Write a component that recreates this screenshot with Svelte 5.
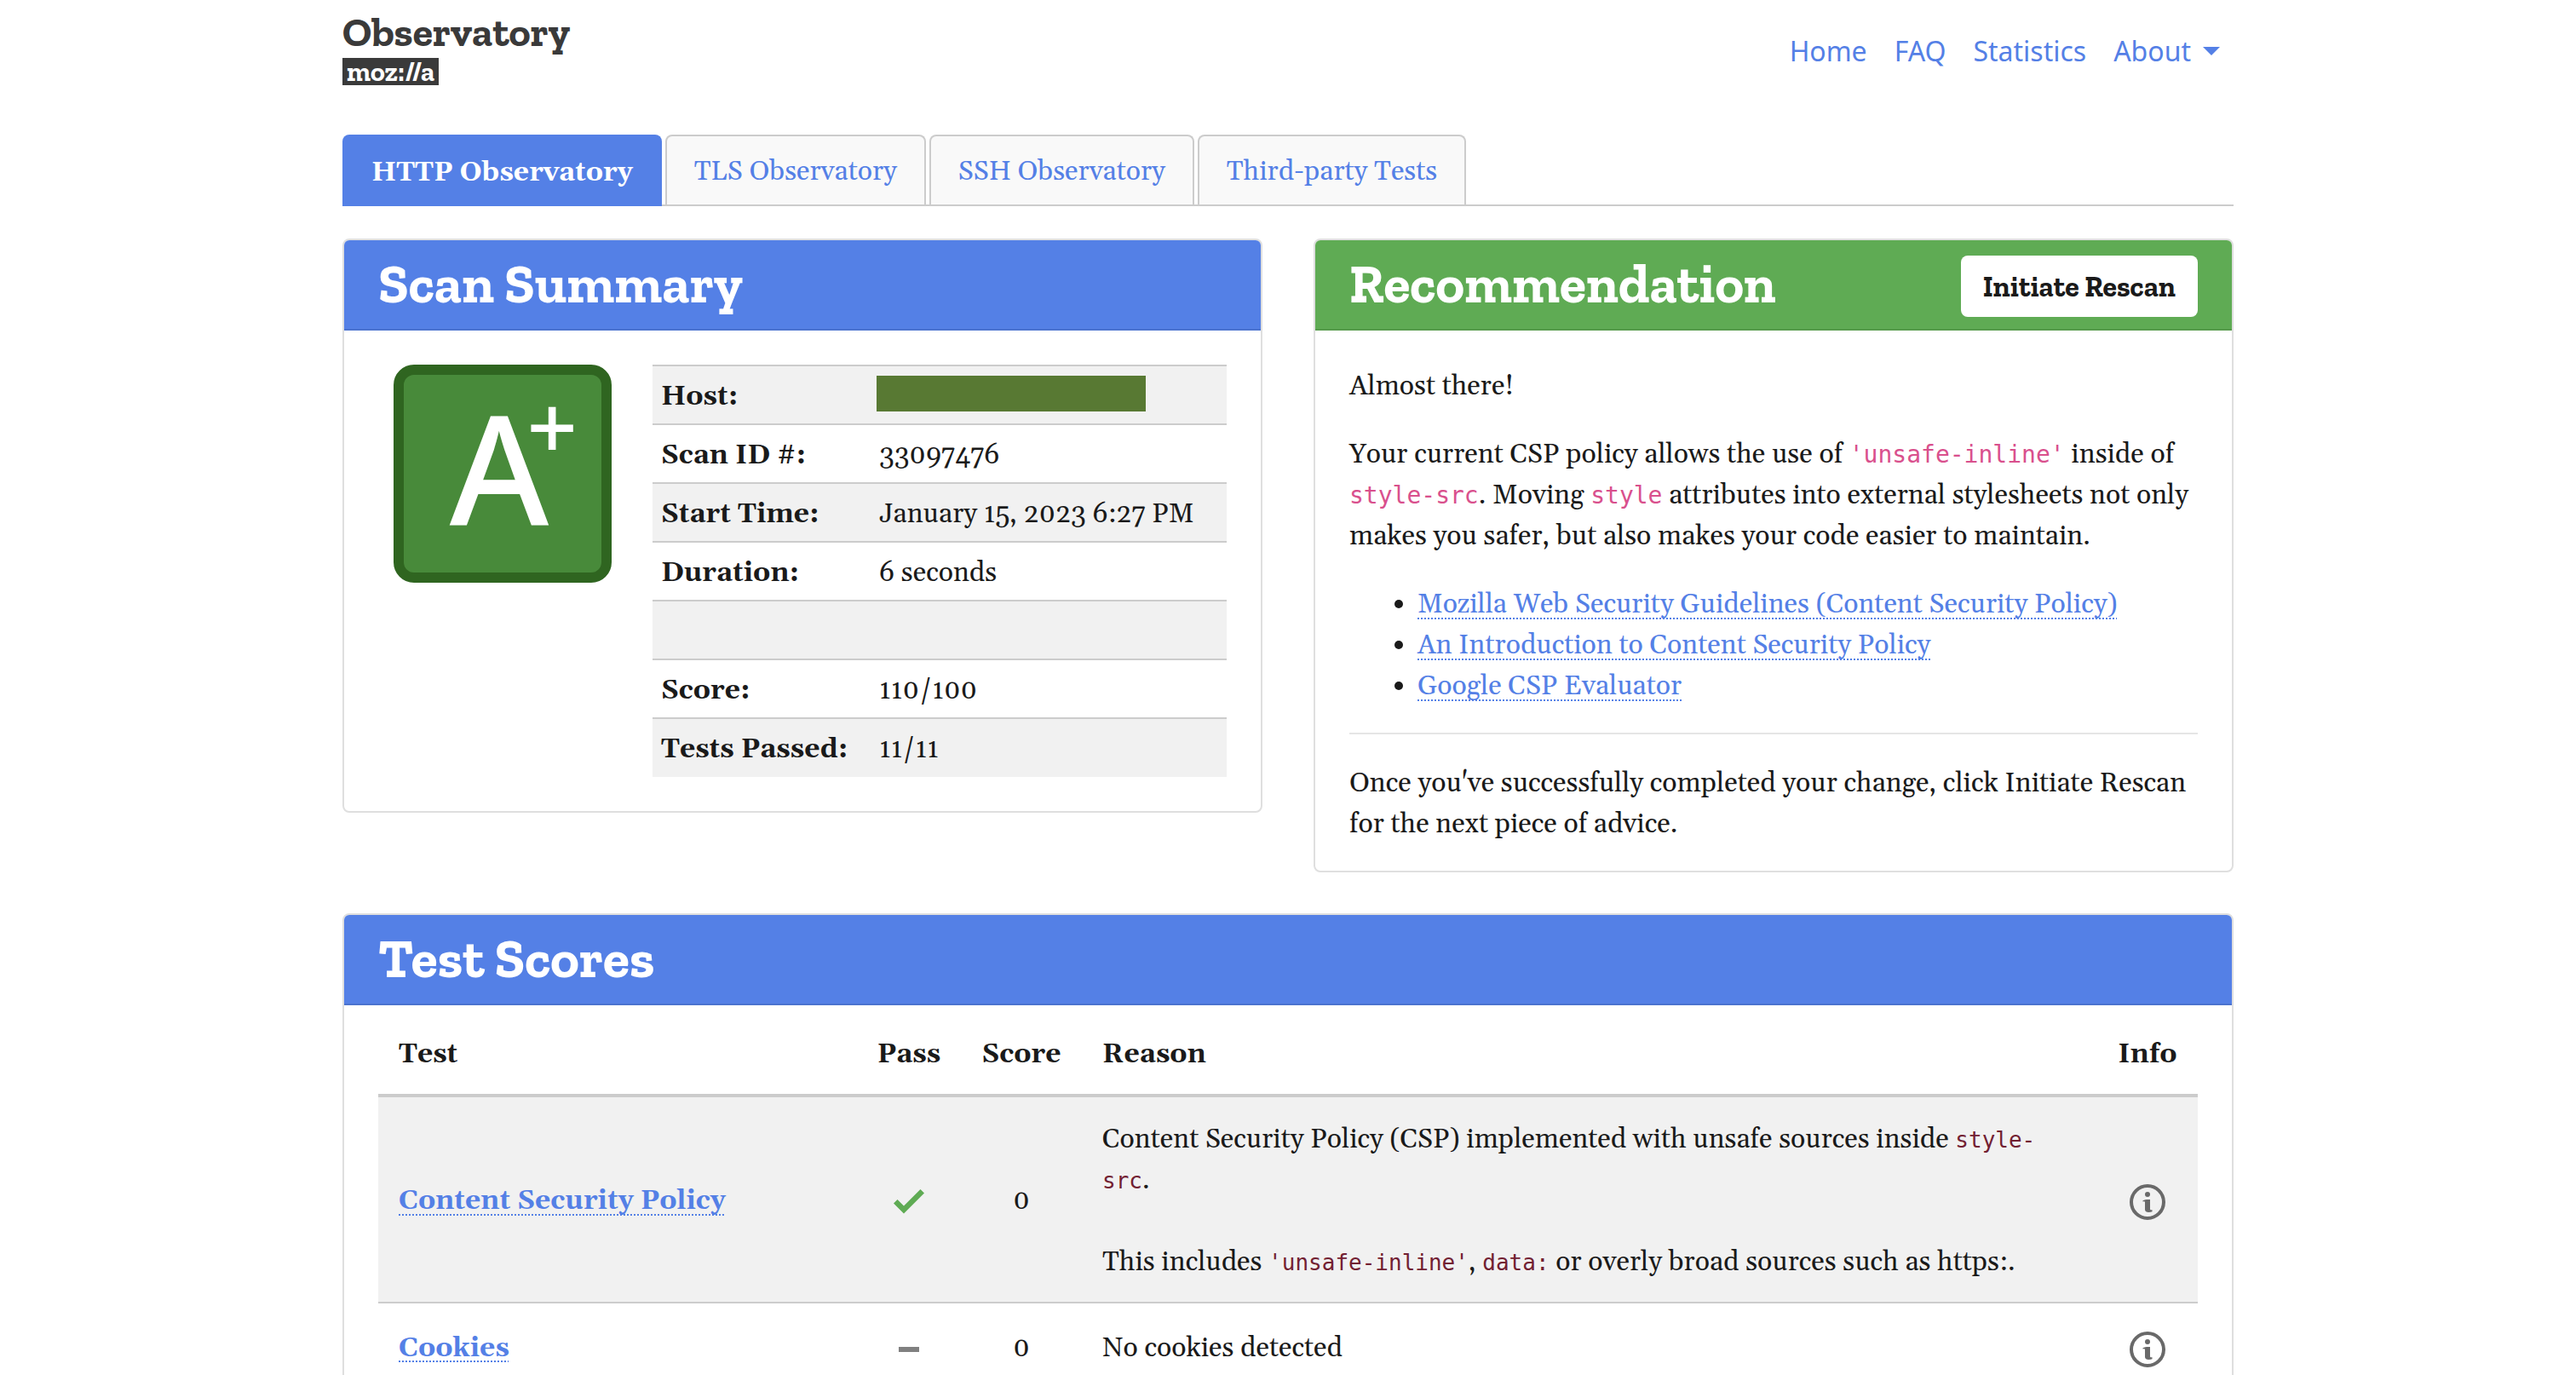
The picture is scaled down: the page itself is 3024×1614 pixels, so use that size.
<script>
  const links = ['Home', 'FAQ', 'Statistics'];
  const tabs = ['HTTP Observatory', 'TLS Observatory', 'SSH Observatory', 'Third-party Tests'];
  const summary = [
    { label: 'Host:', value: '', redacted: true },
    { label: 'Scan ID #:', value: '33097476' },
    { label: 'Start Time:', value: 'January 15, 2023 6:27 PM' },
    { label: 'Duration:', value: '6 seconds' },
    { label: '', value: '' },
    { label: 'Score:', value: '110/100' },
    { label: 'Tests Passed:', value: '11/11' }
  ];
  const guides = [
    'Mozilla Web Security Guidelines (Content Security Policy)',
    'An Introduction to Content Security Policy',
    'Google CSP Evaluator'
  ];
</script>

{#snippet info()}
  <button class="info" aria-label="More information">
    <svg viewBox="0 0 42 42" width="42" height="42" aria-hidden="true">
      <circle cx="21" cy="21" r="19" fill="none" stroke="#696969" stroke-width="4" />
      <circle cx="21" cy="12" r="3" fill="#696969" />
      <path d="M15.500 19.200c2-1 4.600-1.400 8.500-1.200v11c0 1.200.6 1.400 2.500 1.200v2c-3 1-8.500 1.400-8.500-2.200v-9c0-.8-.9-.8-2.500-.5z" fill="#696969" />
    </svg>
  </button>
{/snippet}

<div class="container">
  <header>
    <a class="brand" href="#home">
      <span class="name">Observatory</span>
      <span class="moz">moz://a</span>
    </a>
    <nav>
      {#each links as link}<a href="#{link.toLowerCase()}">{link}</a>{/each}
      <button class="about">About <span class="caret"></span></button>
    </nav>
  </header>

  <div class="tabs" role="tablist">
    {#each tabs as tab, i}
      <button class="tab" class:active={i === 0} role="tab" aria-selected={i === 0}>{tab}</button>
    {/each}
  </div>

  <div class="cards">
    <section class="card">
      <div class="head"><h2>Scan Summary</h2></div>
      <div class="body scan">
        <div class="grade"><span class="letter">A</span><span class="plus">+</span></div>
        <table class="summary">
          <tbody>
            {#each summary as row}
              <tr>
                <th scope="row">{row.label}</th>
                <td class:hidden-host={row.redacted}>
                  {#if row.redacted}<div class="redacted"></div>{:else}{row.value}{/if}
                </td>
              </tr>
            {/each}
          </tbody>
        </table>
      </div>
    </section>

    <section class="card">
      <div class="head green">
        <h2>Recommendation</h2>
        <button class="rescan">Initiate Rescan</button>
      </div>
      <div class="body advice">
        <p>Almost there!</p>
        <p>
          Your current CSP policy allows the use of <code>'unsafe-inline'</code> inside of
          <code>style-src</code>. Moving <code>style</code> attributes into external stylesheets not only
          makes you safer, but also makes your code easier to maintain.
        </p>
        <ul>
          {#each guides as guide}<li><a class="dotted" href="#guide">{guide}</a></li>{/each}
        </ul>
        <hr />
        <p>Once you've successfully completed your change, click Initiate Rescan for the next piece of advice.</p>
      </div>
    </section>
  </div>

  <section class="card">
    <div class="head"><h2>Test Scores</h2></div>
    <div class="body scores">
      <table>
        <thead>
          <tr>
            <th class="test" scope="col">Test</th>
            <th class="pass" scope="col">Pass</th>
            <th class="score" scope="col">Score</th>
            <th scope="col">Reason</th>
            <th class="more" scope="col">Info</th>
          </tr>
        </thead>
        <tbody>
          <tr>
            <th scope="row"><a class="dotted" href="#csp">Content Security Policy</a></th>
            <td class="pass">
              <svg class="mark" viewBox="0 0 36 30" width="36" height="30" role="img" aria-label="Passed">
                <path d="M0 16.500l4.500-4.500 7.500 7.500L31.500 0 36 4.500 12 28.500z" fill="#5fab54" />
              </svg>
            </td>
            <td class="score">0</td>
            <td>
              Content Security Policy (CSP) implemented with unsafe sources inside <code>style-src</code>.<br /><br />
              This includes <code>'unsafe-inline'</code>, <code>data:</code> or overly broad sources such as https:.
            </td>
            <td class="more">{@render info()}</td>
          </tr>
          <tr>
            <th scope="row"><a class="dotted" href="#cookies">Cookies</a></th>
            <td class="pass">
              <svg class="mark" viewBox="0 0 24 6" width="24" height="6" role="img" aria-label="Not applicable">
                <path d="M0 0h24v6H0z" fill="#808080" />
              </svg>
            </td>
            <td class="score">0</td>
            <td>No cookies detected</td>
            <td class="more">{@render info()}</td>
          </tr>
        </tbody>
      </table>
    </div>
  </section>
</div>

<style>
  :global(body) {
    margin: 0;
    background: #fff;
    color: #1a1a1a;
    font: 32px/48px Georgia, Gelasio, 'Liberation Serif', serif;
    font-variant-numeric: oldstyle-nums;
    overflow: hidden;
  }
  * { box-sizing: border-box; }
  button { font: inherit; color: inherit; background: none; border: 0; padding: 0; cursor: pointer; }
  a { color: #5480e6; text-decoration: none; }
  p, ul, h2 { margin: 0; }
  table { border-collapse: collapse; width: 100%; }
  th { text-align: left; }

  .container { max-width: 2280px; margin: 0 auto; padding: 0 30px; }

  header { display: flex; justify-content: space-between; height: 158px; }
  .brand {
    display: flex; flex-direction: column; align-items: flex-start; gap: 4px;
    padding-top: 12px; color: #3a3a3a;
    font-family: 'Zilla Slab', 'DejaVu Serif Condensed', serif; font-weight: 700;
  }
  .name { font-size: 48px; line-height: 52px; }
  .moz { background: #3a3a3a; color: #fff; font-size: 32px; line-height: 32px; padding: 0 5px; }
  nav {
    display: flex; align-items: flex-start; gap: 32px; padding: 36px 16px 0 0;
    font-family: 'Noto Sans', 'Open Sans', sans-serif;
  }
  .about { display: flex; align-items: center; gap: 14px; color: #5480e6; }
  .caret { border: 10px solid transparent; border-top-color: #5480e6; border-bottom: 0; }

  .tabs { display: flex; gap: 4px; height: 84px; border-bottom: 2px solid #ccc; }
  .tab {
    padding: 4px 32px 0; color: #5480e6; background: #f9f9f9;
    border: 2px solid #ccc; border-bottom: 0; border-radius: 8px 8px 0 0;
  }
  .tab.active { background: #5480e6; border-color: #5480e6; color: #fff; font-weight: 700; margin-bottom: -2px; }

  .cards { display: grid; grid-template-columns: 1fr 1fr; gap: 60px; align-items: start; padding: 38px 0 48px; }
  .card { border: 2px solid #dfdfdf; border-radius: 8px; background: #fff; }
  .head {
    display: flex; justify-content: space-between; align-items: center; height: 106px; padding: 0 40px;
    background: #5480e6; color: #fff; border-bottom: 2px solid #4b73cf; border-radius: 6px 6px 0 0;
  }
  .head.green { background: #5fab54; border-color: #559a4b; }
  h2 { padding-bottom: 2px; font: 700 64px/72px 'Zilla Slab', 'DejaVu Serif Condensed', serif; }
  .rescan {
    height: 72px; margin-top: 4px; padding: 2px 26px 0; border-radius: 8px; background: #fff; color: #1a1a1a;
    font: 700 34px/48px 'Zilla Slab', 'DejaVu Serif Condensed', serif;
  }
  .body { padding: 40px; }

  .scan { display: grid; grid-template-columns: 256px 1fr; gap: 48px; align-items: start; padding-left: 58px; }
  .grade {
    display: flex; justify-content: center; height: 256px; padding-right: 8px; position: relative;
    background: #488a3a; border: 12px solid #2f6520; border-radius: 24px; color: #fff;
    font-family: 'Noto Sans', 'Open Sans', sans-serif; font-weight: 500;
  }
  .letter { font-size: 178px; line-height: 216px; }
  .plus { position: absolute; right: 28px; top: 4px; font-size: 104px; line-height: 112px; }
  .summary th, .summary td { height: 69px; padding: 4px 10px 0; border-top: 2px solid #ccc; }
  .summary .hidden-host { padding: 0 10px 4px 7px; }
  .summary th { width: 256px; }
  .summary tr:nth-child(odd), .scores tbody tr:nth-child(odd) { background: #f1f1f1; }
  .redacted { width: 316px; max-width: 100%; height: 42px; background: #587933; }

  .advice { padding: 42px 40px 30px; }
  .advice > p, .advice > ul { margin-bottom: 32px; }
  .advice > p:last-child { margin-bottom: 0; }
  ul { padding-left: 80px; }
  hr { border: 0; border-top: 2px solid #e5e5e5; margin: -2px 0 34px; }
  .dotted { text-decoration: underline dotted 2px; text-underline-offset: 6px; text-decoration-skip-ink: none; }
  code { font: 28px 'DejaVu Sans Mono', monospace; color: #d9508d; }

  .scores { padding: 8px 40px; }
  .scores th, .scores td { padding: 26px 24px 22px; }
  .scores thead th { border-bottom: 4px solid #ccc; }
  .scores tbody tr + tr { border-top: 2px solid #ccc; }
  .scores tbody tr { height: 102px; }
  .scores code { font-size: 26px; color: #722032; }
  .scores .test { width: 562px; }
  .scores .pass { width: 122px; padding: 26px 0 22px; text-align: center; }
  .scores .score { width: 142px; padding: 26px 0 22px; text-align: center; }
  .scores .more { width: 118px; padding: 26px 0 22px; text-align: center; }
  .mark { display: block; margin: 2px auto 0; }
  .info { display: block; height: 42px; margin: 2px auto 0; }
  .info svg { display: block; }
</style>
